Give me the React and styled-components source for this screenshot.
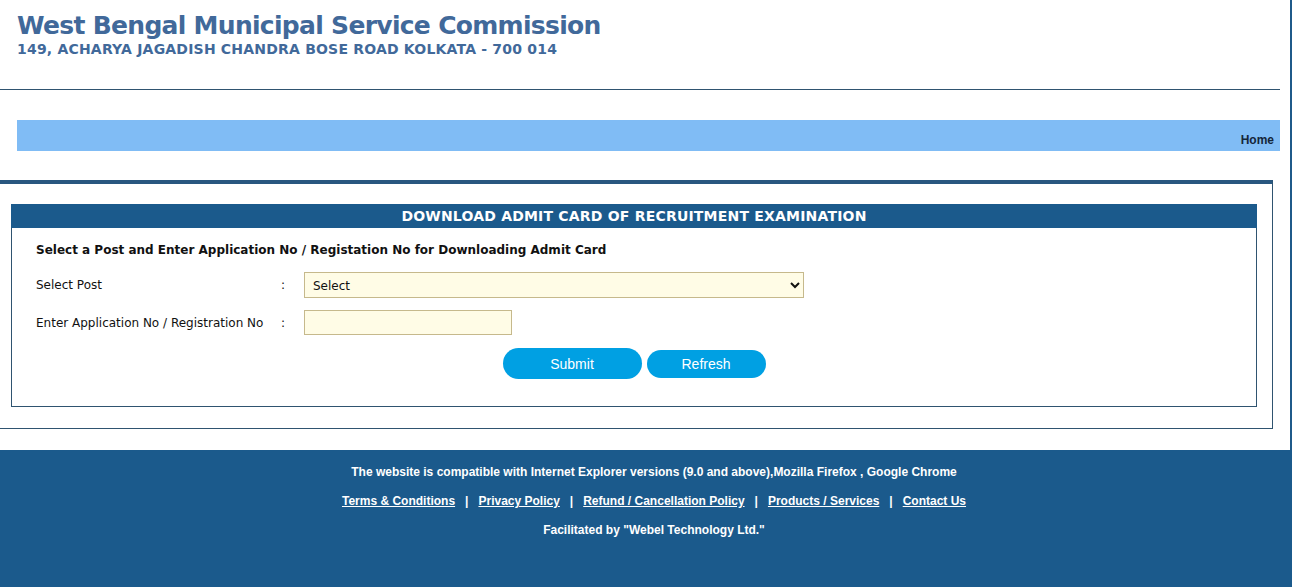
import React from 'react';
import styled, { createGlobalStyle } from 'styled-components';

const Global = createGlobalStyle`
  html, body { margin: 0; padding: 0; background: #fff; }
  body { font-family: "DejaVu Sans", Verdana, sans-serif; color: #111; }
  * { box-sizing: border-box; }
`;

const Page = styled.div`
  width: 1292px;
  height: 450px;
  border-right: 2px solid #1f5a8a;
  display: flex;
  flex-direction: column;
`;

const Header = styled.header`
  width: 1280px;
  height: 90px;
  padding: 10px 0 0 17px;
  border-bottom: 1px solid #2f5470;
`;

const Title = styled.h1`
  margin: 0;
  font-size: 25px;
  letter-spacing: -0.7px;
  line-height: 32px;
  font-weight: bold;
  color: #41699a;
`;

const Address = styled.div`
  font-size: 14px;
  letter-spacing: 0.2px;
  line-height: 14px;
  font-weight: bold;
  color: #41699a;
`;

const NavBar = styled.nav`
  margin: 30px 0 0 17px;
  width: 1263px;
  height: 31px;
  background: #80bcf5;
  display: flex;
  justify-content: flex-end;
  align-items: flex-end;
  padding: 0 6px 4px 0;
`;

const NavLink = styled.a`
  font-family: "Liberation Sans", Arial, sans-serif;
  font-size: 12px;
  font-weight: bold;
  color: #14263a;
  text-decoration: none;
`;

const Content = styled.main`
  margin-top: 29px;
  width: 1273px;
  height: 249px;
  border-top: 4px solid #29577f;
  border-right: 1px solid #2f5470;
  border-bottom: 1px solid #2f5470;
  padding: 20px 15px 0 11px;
`;

const Panel = styled.section`
  border: 1px solid #2f5470;
  border-top: none;
  height: 203px;
`;

const PanelHead = styled.div`
  height: 24px;
  margin: 0 -1px;
  background: #1b5a8c;
  color: #fff;
  font-size: 14px;
  letter-spacing: 0.2px;
  font-weight: bold;
  line-height: 24px;
  text-align: center;
`;

const PanelBody = styled.div`
  padding: 14px 0 0 24px;
`;

const Lead = styled.div`
  font-size: 12px;
  font-weight: bold;
  line-height: 16px;
  margin-bottom: 14px;
`;

const Row = styled.div`
  display: grid;
  grid-template-columns: 245px 23px 1fr;
  align-items: center;
  margin-bottom: ${p => p.$gap}px;
`;

const Label = styled.label`
  font-size: 12px;
`;

const Colon = styled.span`
  font-size: 12px;
`;

const Select = styled.select`
  width: 500px;
  height: 26px;
  background: #fffce6;
  border: 1px solid #c6b98c;
  border-radius: 0;
  font-family: "DejaVu Sans", Verdana, sans-serif;
  font-size: 12px;
  color: #111;
  padding: 2px 4px 0;
`;

const Input = styled.input`
  width: 208px;
  height: 25px;
  background: #fffce6;
  border: 1px solid #c6b98c;
  padding: 0 4px;
`;

const Actions = styled.div`
  display: flex;
  justify-content: center;
  align-items: center;
  gap: 5px;
  margin-left: -24px;
`;

const Button = styled.button`
  width: ${p => p.$w}px;
  height: ${p => p.$h}px;
  border: none;
  border-radius: 16px;
  background: #00a0e3;
  color: #fff;
  font-family: "Liberation Sans", Arial, sans-serif;
  font-size: 14px;
  cursor: pointer;
`;

const Footer = styled.footer`
  height: 137px;
  background: #1b5a8c;
  color: #fff;
  padding: 8px 0 0 16px;
  font-family: "Liberation Sans", Arial, sans-serif;
  font-size: 12px;
  font-weight: bold;
  text-align: center;
`;

const FootLine = styled.div`
  height: 29px;
  line-height: 29px;
`;

const FootLink = styled.a`
  color: #fff;
  text-decoration: underline;
`;

const Sep = styled.span`
  margin: 0 10px;
`;

const links = [
  'Terms & Conditions',
  'Privacy Policy',
  'Refund / Cancellation Policy',
  'Products / Services',
  'Contact Us',
];

export default function App() {
  return (
    <>
      <Global />
      <Page>
        <Header>
          <Title>West Bengal Municipal Service Commission</Title>
          <Address>149, ACHARYA JAGADISH CHANDRA BOSE ROAD KOLKATA - 700 014</Address>
        </Header>
        <NavBar>
          <NavLink href="#">Home</NavLink>
        </NavBar>
        <Content>
          <Panel>
            <PanelHead>DOWNLOAD ADMIT CARD OF RECRUITMENT EXAMINATION</PanelHead>
            <PanelBody>
              <Lead>Select a Post and Enter Application No / Registation No for Downloading Admit Card</Lead>
              <Row $gap={12}>
                <Label>Select Post</Label>
                <Colon>:</Colon>
                <div>
                  <Select defaultValue="">
                    <option value="">Select</option>
                  </Select>
                </div>
              </Row>
              <Row $gap={13}>
                <Label>Enter Application No / Registration No</Label>
                <Colon>:</Colon>
                <div>
                  <Input type="text" />
                </div>
              </Row>
              <Actions>
                <Button $w={139} $h={31}>Submit</Button>
                <Button $w={119} $h={28}>Refresh</Button>
              </Actions>
            </PanelBody>
          </Panel>
        </Content>
      </Page>
      <Footer>
        <FootLine>The website is compatible with Internet Explorer versions (9.0 and above),Mozilla Firefox , Google Chrome</FootLine>
        <FootLine>
          {links.map((l, i) => (
            <React.Fragment key={l}>
              {i > 0 && <Sep>|</Sep>}
              <FootLink href="#">{l}</FootLink>
            </React.Fragment>
          ))}
        </FootLine>
        <FootLine>Facilitated by "Webel Technology Ltd."</FootLine>
      </Footer>
    </>
  );
}
